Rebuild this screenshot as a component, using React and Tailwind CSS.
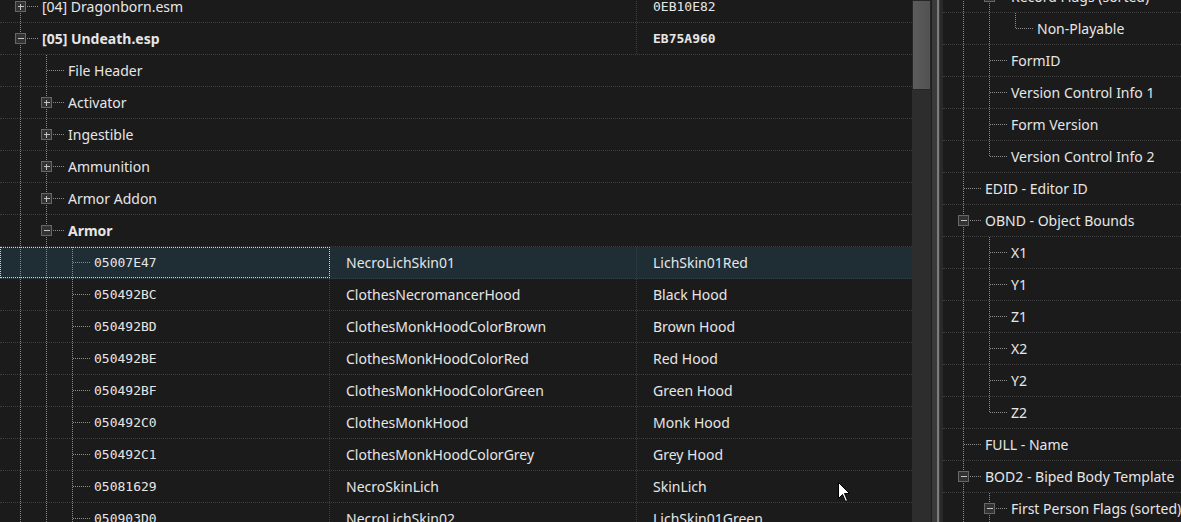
import React from 'react';

const LINE = '#8a8a8a';

const leftRows = [
  { level: 0, anc: [], box: '+', label: '[04] Dragonborn.esm', file: true, crc: '0EB10E82' },
  { level: 0, anc: [], box: '-', label: '[05] Undeath.esp', file: true, crc: 'EB75A960', bold: true },
  { level: 1, anc: [true], label: 'File Header' },
  { level: 1, anc: [true], box: '+', label: 'Activator' },
  { level: 1, anc: [true], box: '+', label: 'Ingestible' },
  { level: 1, anc: [true], box: '+', label: 'Ammunition' },
  { level: 1, anc: [true], box: '+', label: 'Armor Addon' },
  { level: 1, anc: [true], box: '-', label: 'Armor', bold: true },
  { level: 2, anc: [true, true], id: '05007E47', edid: 'NecroLichSkin01', name: 'LichSkin01Red', selected: true },
  { level: 2, anc: [true, true], id: '050492BC', edid: 'ClothesNecromancerHood', name: 'Black Hood' },
  { level: 2, anc: [true, true], id: '050492BD', edid: 'ClothesMonkHoodColorBrown', name: 'Brown Hood' },
  { level: 2, anc: [true, true], id: '050492BE', edid: 'ClothesMonkHoodColorRed', name: 'Red Hood' },
  { level: 2, anc: [true, true], id: '050492BF', edid: 'ClothesMonkHoodColorGreen', name: 'Green Hood' },
  { level: 2, anc: [true, true], id: '050492C0', edid: 'ClothesMonkHood', name: 'Monk Hood' },
  { level: 2, anc: [true, true], id: '050492C1', edid: 'ClothesMonkHoodColorGrey', name: 'Grey Hood' },
  { level: 2, anc: [true, true], id: '05081629', edid: 'NecroSkinLich', name: 'SkinLich' },
  { level: 2, anc: [true, true], id: '050903D0', edid: 'NecroLichSkin02', name: 'LichSkin01Green' },
];

const rightRows = [
  { level: 1, anc: [true], box: '-', label: 'Record Flags (sorted)' },
  { level: 2, anc: [true, true], last: true, label: 'Non-Playable' },
  { level: 1, anc: [true], label: 'FormID' },
  { level: 1, anc: [true], label: 'Version Control Info 1' },
  { level: 1, anc: [true], label: 'Form Version' },
  { level: 1, anc: [true], last: true, label: 'Version Control Info 2' },
  { level: 0, anc: [], label: 'EDID - Editor ID' },
  { level: 0, anc: [], box: '-', label: 'OBND - Object Bounds' },
  { level: 1, anc: [true], label: 'X1' },
  { level: 1, anc: [true], label: 'Y1' },
  { level: 1, anc: [true], label: 'Z1' },
  { level: 1, anc: [true], label: 'X2' },
  { level: 1, anc: [true], label: 'Y2' },
  { level: 1, anc: [true], last: true, label: 'Z2' },
  { level: 0, anc: [], label: 'FULL - Name' },
  { level: 0, anc: [], box: '-', label: 'BOD2 - Biped Body Template' },
  { level: 1, anc: [true], box: '-', label: 'First Person Flags (sorted)' },
];

// tree guide lines + expand box, drawn per row
function Guides({ level, anc, last, box }) {
  const w = 42 + 26 * level;
  const cx = 20 + 26 * level + 0.5;
  const h = 31;
  return (
    <svg width={w} height={h} className="shrink-0" shapeRendering="crispEdges">
      {anc.map((on, i) =>
        on ? (
          <line key={i} x1={20 + 26 * i + 0.5} y1={0} x2={20 + 26 * i + 0.5} y2={h} stroke={LINE} strokeDasharray="1 1" />
        ) : null
      )}
      <line x1={cx} y1={0} x2={cx} y2={last ? 15 : h} stroke={LINE} strokeDasharray="1 1" />
      <line x1={cx} y1={15.5} x2={cx + 17} y2={15.5} stroke={LINE} strokeDasharray="1 1" />
      {box && (
        <g>
          <rect x={cx - 5} y={10.5} width={10} height={10} fill="#333333" stroke="#676767" />
          <line x1={cx - 3} y1={15.5} x2={cx + 3} y2={15.5} stroke="#c4c4c4" />
          {box === '+' && <line x1={cx} y1={12.5} x2={cx} y2={18.5} stroke="#c4c4c4" />}
        </g>
      )}
    </svg>
  );
}

const sep = 'border-r border-dotted border-[#3e3e3e]';
const mono = { fontFamily: '"DejaVu Sans Mono", "Liberation Mono", monospace' };

function LeftRow({ r }) {
  const base = `flex h-[32px] shrink-0 border-b border-dotted border-[#3e3e3e] ${r.selected ? 'bg-[#1f2d35]' : ''}`;
  if (r.file) {
    return (
      <div className={base}>
        <div className={`flex w-[637px] shrink-0 items-center ${sep}`}>
          <Guides {...r} />
          <span className={r.bold ? 'font-bold' : ''}>{r.label}</span>
        </div>
        <div className={`flex items-center pl-[16px] text-[13px] ${r.bold ? 'font-bold' : ''}`} style={mono}>
          {r.crc}
        </div>
      </div>
    );
  }
  if (!r.id) {
    return (
      <div className={`${base} items-center`}>
        <Guides {...r} />
        <span className={r.bold ? 'font-bold' : ''}>{r.label}</span>
      </div>
    );
  }
  return (
    <div className={base}>
      <div
        className={`flex w-[330px] shrink-0 items-center ${sep} ${
          r.selected ? 'outline-1 outline-dotted outline-[#d0d0d0] -outline-offset-1' : ''
        }`}
      >
        <Guides {...r} />
        <span className="text-[13px]" style={mono}>{r.id}</span>
      </div>
      <div className={`flex w-[307px] shrink-0 items-center pl-[16px] ${sep}`}>{r.edid}</div>
      <div className="flex items-center pl-[16px]">{r.name}</div>
    </div>
  );
}

function RightRow({ r }) {
  return (
    <div className="flex h-[32px] shrink-0 items-center whitespace-nowrap border-b border-dotted border-[#3e3e3e]">
      <Guides {...r} />
      <span>{r.label}</span>
    </div>
  );
}

export default function App() {
  return (
    <div
      className="relative flex h-[522px] w-[1181px] overflow-hidden bg-[#1b1b1b] text-[14px] text-[#e6e6e6]"
      style={{ fontFamily: '"Noto Sans", "Open Sans", sans-serif' }}
    >
      <div className="flex w-[912px] shrink-0 flex-col overflow-hidden">
        <div className="mt-[-9px] flex flex-col">
          {leftRows.map((r, i) => (
            <LeftRow key={i} r={r} />
          ))}
        </div>
      </div>

      <div className="flex w-[19px] shrink-0 flex-col bg-[#2d2d2d]">
        <div className="h-[90px] border border-[#262626] bg-gradient-to-r from-[#5c5c5c] to-[#525252]" />
      </div>

      <div className="flex w-[12px] shrink-0">
        <div className="w-px bg-[#1e1e1e]" />
        <div className="w-[5px] bg-[#3a3a3a]" />
        <div className="w-[2px] bg-[#7c7c7c]" />
        <div className="w-px bg-[#3a3a3a]" />
        <div className="w-[3px] bg-[#292929]" />
      </div>

      <div className="flex min-w-0 flex-1 flex-col overflow-hidden">
        <div className="mt-[-19px] flex flex-col">
          {rightRows.map((r, i) => (
            <RightRow key={i} r={r} />
          ))}
        </div>
      </div>

      <svg className="absolute left-[838px] top-[482px]" width="13" height="21" viewBox="0 0 13 21">
        <path d="M0.5 0.5 L0.5 16.5 L4.5 12.5 L7.5 19.5 L9.5 18.5 L6.5 11.5 L11.5 11.5 Z" fill="#ffffff" stroke="#000000" strokeWidth="1" />
      </svg>
    </div>
  );
}
